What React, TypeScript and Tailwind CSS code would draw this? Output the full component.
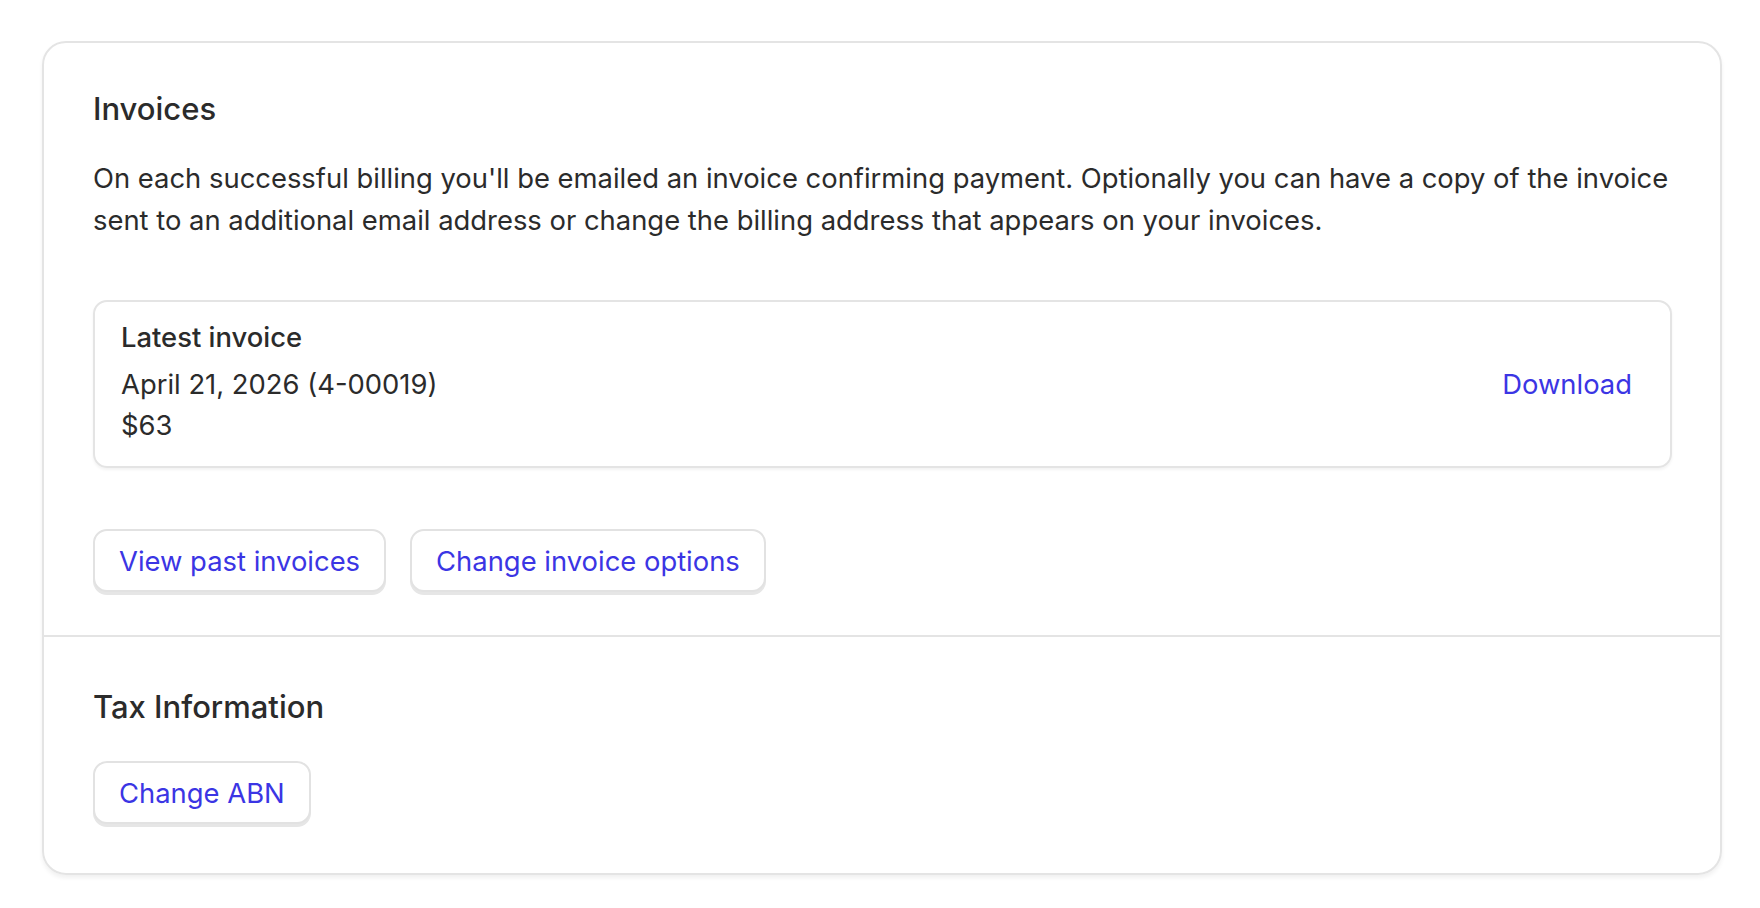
import React from 'react'

const btn =
  'h-[63px] px-[24px] pt-[3px] rounded-[14px] border-2 border-[#e2e2e2] bg-white text-[27.4px] text-[#3b35e4] shadow-[0_3px_0_#e6e6e6] leading-none'

export default function App() {
  return (
    <div className="min-h-[908px] bg-white pt-[41px] pl-[42px] font-['Inter',sans-serif] text-[#2b2b2b]">
      <div className="w-[1680px] rounded-[24px] border-2 border-[#e4e4e4] shadow-[0_3px_4px_rgba(0,0,0,0.06)]">
        {/* Invoices */}
        <section className="pl-[49px] pr-[48px] pt-[46px] pb-[43px]">
          <h2 className="text-[31px] font-medium leading-[40px]">Invoices</h2>
          <p className="mt-[29px] mr-[-12px] text-[27.4px] leading-[41.5px]">
            On each successful billing you'll be emailed an invoice confirming payment. Optionally you can have a copy of
            the invoice sent to an additional email address or change the billing address that appears on your invoices.
          </p>

          <div className="mt-[59px] flex items-center justify-between rounded-[14px] border-2 border-[#e4e4e4] pl-[26px] pr-[38px] pt-[15px] pb-[19px] shadow-[0_2px_3px_rgba(0,0,0,0.05)]">
            <div className="text-[27.4px] leading-[41.5px]">
              <div className="font-medium">Latest invoice</div>
              <div className="mt-[5px]">April 21, 2026 (4-00019)</div>
              <div>$63</div>
            </div>
            <a className="mt-[6px] text-[27.4px] text-[#3b35e4]">Download</a>
          </div>

          <div className="mt-[61px] flex gap-[24px]">
            <button className={btn}>View past invoices</button>
            <button className={btn}>Change invoice options</button>
          </div>
        </section>

        {/* Tax */}
        <section className="border-t-2 border-[#e4e4e4] pl-[49px] pr-[48px] pt-[50px] pb-[49px]">
          <h2 className="text-[31px] font-medium leading-[40px]">Tax Information</h2>
          <div className="mt-[34px] flex">
            <button className={btn}>Change ABN</button>
          </div>
        </section>
      </div>
    </div>
  )
}
